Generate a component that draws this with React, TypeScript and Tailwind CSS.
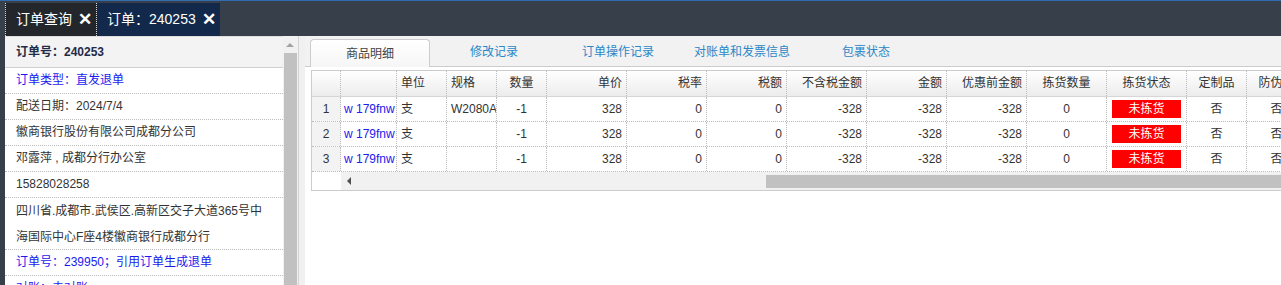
import React from 'react';

const font = { fontFamily: '"Liberation Sans", "Noto Sans CJK SC", sans-serif' };

type Col = { title: string; w: number; align: 'left' | 'center' | 'right' };

const cols: Col[] = [
    { title: '', w: 56, align: 'right' },
    { title: '单位', w: 50, align: 'left' },
    { title: '规格', w: 50, align: 'left' },
    { title: '数量', w: 50, align: 'center' },
    { title: '单价', w: 80, align: 'right' },
    { title: '税率', w: 80, align: 'right' },
    { title: '税额', w: 80, align: 'right' },
    { title: '不含税金额', w: 80, align: 'right' },
    { title: '金额', w: 80, align: 'right' },
    { title: '优惠前金额', w: 80, align: 'right' },
    { title: '拣货数量', w: 80, align: 'center' },
    { title: '拣货状态', w: 80, align: 'center' },
    { title: '定制品', w: 60, align: 'center' },
    { title: '防伪码', w: 60, align: 'center' },
];

const rows = [
    ['w 179fnw', '支', 'W2080A', '-1', '328', '0', '0', '-328', '-328', '-328', '0', '未拣货', '否', '否'],
    ['w 179fnw', '支', '', '-1', '328', '0', '0', '-328', '-328', '-328', '0', '未拣货', '否', '否'],
    ['w 179fnw', '支', '', '-1', '328', '0', '0', '-328', '-328', '-328', '0', '未拣货', '否', '否'],
];

const alignCls = (a: Col['align']) =>
    a === 'left' ? 'text-left' : a === 'right' ? 'text-right' : 'text-center';

const infoRows: { text: string; blue?: boolean }[] = [
    { text: '订单类型：直发退单', blue: true },
    { text: '配送日期：2024/7/4' },
    { text: '徽商银行股份有限公司成都分公司' },
    { text: '邓露萍 , 成都分行办公室' },
    { text: '15828028258' },
];

const tabs = ['商品明细', '修改记录', '订单操作记录', '对账单和发票信息', '包裹状态'];

export default function App() {
    return (
        <div className="w-[1281px] h-[285px] overflow-hidden flex flex-col bg-[#363f4a] text-[12px]" style={font}>
            {/* top tab bar */}
            <div className="h-[36px] shrink-0 border-t border-[#2f6db0] pt-[2px] pl-[5px] flex">
                <div className="h-[33px] w-[92px] bg-[#23272c] border-x border-dotted border-[#d8d8d8] flex items-center pl-[10px] text-white text-[14px]">
                    <span>订单查询</span>
                    <span className="ml-[6px] text-[17px] font-bold leading-none">✕</span>
                </div>
                <div className="h-[33px] w-[123px] bg-[#13294b] flex items-center pl-[10px] text-white text-[14px]">
                    <span>订单：240253</span>
                    <span className="ml-[6px] text-[17px] font-bold leading-none">✕</span>
                </div>
            </div>

            <div className="flex flex-1 min-h-0 pl-[5px]">
                {/* left info panel */}
                <div className="w-[292px] flex bg-white">
                    <div className="w-[278px] flex flex-col">
                        <div className="h-[32px] shrink-0 bg-[#f3f3f3] border-t border-[#dedede] border-b border-b-[#cfcfcf] pl-[11px] flex items-center font-bold text-[#1f2b48]">
                            订单号：240253
                        </div>
                        {infoRows.map((r, i) => (
                            <div
                                key={i}
                                className={`h-[26px] shrink-0 leading-[25px] pl-[11px] border-b border-dotted border-[#bdbdbd] ${r.blue ? 'text-[#1a1aee]' : 'text-[#333]'}`}
                            >
                                {r.text}
                            </div>
                        ))}
                        <div className="h-[52px] shrink-0 leading-[26px] pl-[11px] border-b border-dotted border-[#bdbdbd] text-[#333]">
                            <div>四川省.成都市.武侯区.高新区交子大道365号中</div>
                            <div>海国际中心F座4楼徽商银行成都分行</div>
                        </div>
                        <div className="h-[26px] shrink-0 leading-[25px] pl-[11px] border-b border-dotted border-[#bdbdbd] text-[#1a1aee]">
                            订单号：239950；引用订单生成退单
                        </div>
                        <div className="h-[26px] shrink-0 leading-[25px] pl-[11px] text-[#1a1aee]">
                            对账：未对账
                        </div>
                    </div>
                    {/* vertical scrollbar */}
                    <div className="w-[14px] bg-[#f1f1f1] flex flex-col">
                        <div className="h-[17px] shrink-0 flex items-center justify-center">
                            <div className="w-0 h-0 border-x-[4px] border-x-transparent border-b-[4px] border-b-[#a3a3a3]" />
                        </div>
                        <div className="flex-1 ml-[1px] w-[13px] bg-[#c1c1c1]" />
                    </div>
                </div>

                {/* splitter */}
                <div className="w-[8px] bg-[#f0f0f0] flex">
                    <div className="ml-[1px] w-px bg-[#d4d4d4]" />
                </div>

                {/* right panel */}
                <div className="flex-1 min-w-0 bg-white overflow-hidden flex flex-col">
                    <div className="h-[31px] shrink-0 bg-[#f2f2f2] border-b border-[#cccccc] flex items-end pl-[5px]">
                        {tabs.map((t, i) =>
                            i === 0 ? (
                                <div
                                    key={t}
                                    className="w-[120px] mr-[4px] h-[28px] -mb-px rounded-t-[4px] border border-b-0 border-[#cccccc] bg-gradient-to-b from-white to-[#f6f6f6] flex items-center justify-center text-[#444]"
                                >
                                    {t}
                                </div>
                            ) : (
                                <div key={t} className="w-[120px] mr-[4px] h-[28px] flex items-center justify-center text-[#2b87c8]">
                                    {t}
                                </div>
                            )
                        )}
                    </div>

                    {/* grid */}
                    <div className="ml-[6px] mt-[3px] w-[1100px] border border-[#cccccc] text-[#333]">
                        <div className="flex h-[26px] bg-gradient-to-b from-white to-[#ececec] border-b border-[#d6d6d6]">
                            <div className="w-[29px] shrink-0 border-r border-dotted border-[#bbbbbb]" />
                            {cols.map((c, i) => (
                                <div
                                    key={i}
                                    style={{ width: c.w }}
                                    className={`shrink-0 px-[4px] leading-[25px] border-r border-dotted border-[#bbbbbb] whitespace-nowrap overflow-hidden ${alignCls(c.align)}`}
                                >
                                    {c.title}
                                </div>
                            ))}
                        </div>
                        {rows.map((r, ri) => (
                            <div key={ri} className="flex h-[25px] border-b border-dotted border-[#bbbbbb]">
                                <div className="w-[29px] shrink-0 bg-[#f3f3f3] border-r border-dotted border-[#bbbbbb] text-center leading-[24px]">
                                    {ri + 1}
                                </div>
                                {cols.map((c, ci) => (
                                    <div
                                        key={ci}
                                        style={{ width: c.w }}
                                        className={`shrink-0 leading-[24px] border-r border-dotted border-[#bbbbbb] whitespace-nowrap overflow-hidden ${ci === 0 ? 'px-[3px] text-[#2020ee]' : 'px-[4px]'} ${ci === 2 ? 'px-[3px]' : ''} ${alignCls(c.align)}`}
                                    >
                                        {c.title === '拣货状态' ? (
                                            <div className="mt-[3px] mx-[1px] h-[18px] leading-[18px] bg-[#ff0000] text-white text-center">
                                                {r[ci]}
                                            </div>
                                        ) : (
                                            r[ci]
                                        )}
                                    </div>
                                ))}
                            </div>
                        ))}
                        {/* horizontal scrollbar */}
                        <div className="flex h-[18px]">
                            <div className="w-[29px] shrink-0 bg-white" />
                            <div className="flex-1 bg-[#f1f1f1] flex items-center">
                                <div className="ml-[6px] w-0 h-0 border-y-[4px] border-y-transparent border-r-[4px] border-r-[#505050]" />
                                <div className="ml-[415px] h-[13px] flex-1 bg-[#c1c1c1]" />
                            </div>
                        </div>
                    </div>
                </div>
            </div>
        </div>
    );
}
